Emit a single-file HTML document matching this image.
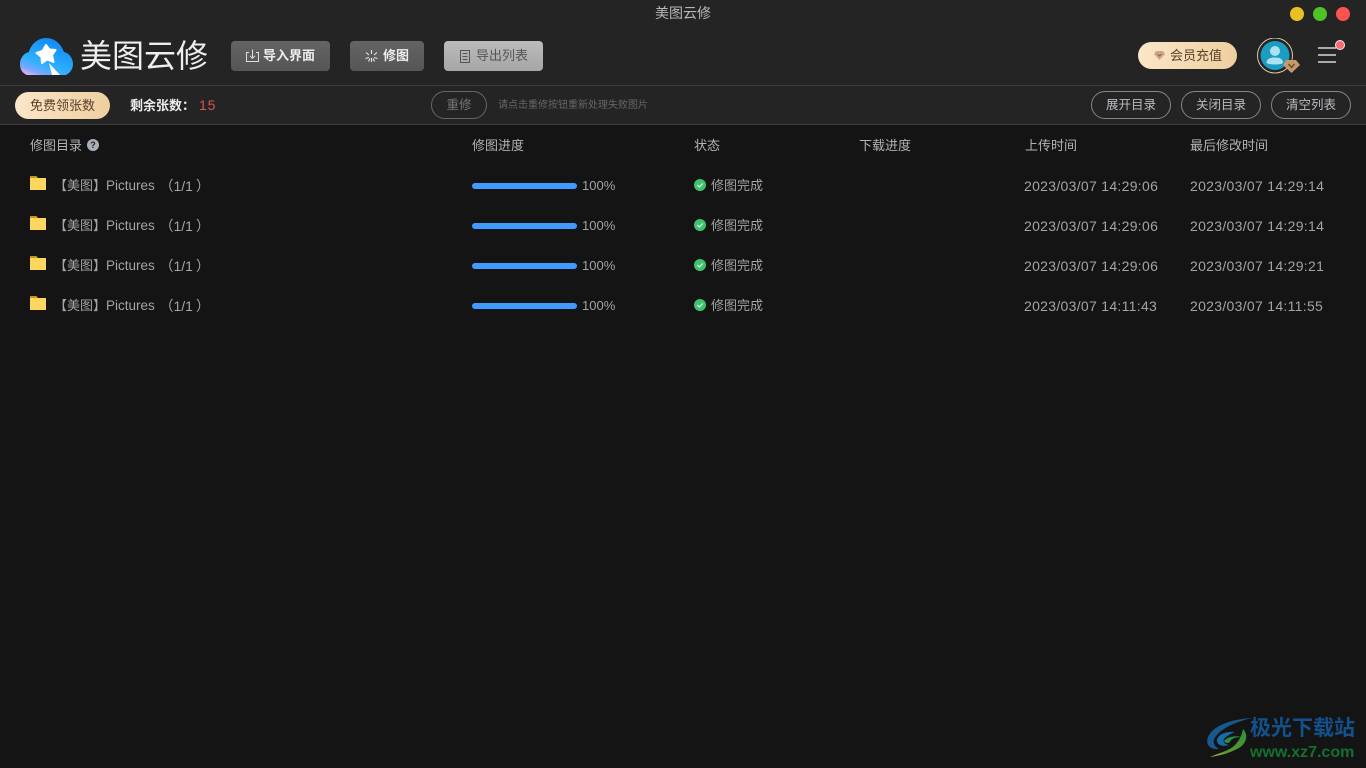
<!DOCTYPE html>
<html lang="zh"><head><meta charset="utf-8"><title>美图云修</title>
<style>
*{box-sizing:border-box;margin:0;padding:0}
html,body{width:1366px;height:768px;overflow:hidden;background:#141414;font-family:"Liberation Sans","Noto Sans CJK SC",sans-serif}
.a{position:absolute;white-space:nowrap}
#top{position:absolute;left:0;top:0;width:1366px;height:85px;background:#242424}
#bar{position:absolute;left:0;top:85px;width:1366px;height:40px;background:#242424;border-top:1px solid #3c3c3c;border-bottom:1px solid #3c3c3c}
.btn{position:absolute;top:41px;height:30px;border-radius:4px;background:linear-gradient(#646464,#555);color:#eee;font-size:13px;line-height:30px;font-weight:700}
.ol{position:absolute;top:91px;height:28px;border:1px solid #858585;border-radius:14px;color:#b8bcc0;font-size:12.5px;line-height:26px;text-align:center;width:80px}
.h{position:absolute;top:137px;font-size:13px;line-height:17px;color:#b0b4b8}
.t{position:absolute;font-size:13px;line-height:18px;color:#a4a4a4;white-space:nowrap}
.d{font-size:14px;letter-spacing:.3px}
.p{font-size:13.5px}
.q{font-size:14px}
.q span{margin-left:3px}
.pb{position:absolute;left:472px;width:105px;height:6px;border-radius:3px;background:#3f9bff}
.f{position:absolute;left:30px}
.c{position:absolute;left:694px}
</style></head><body>
<div id="top"></div><div id="bar"></div>

<div class="a" style="left:0;width:1366px;top:4px;text-align:center;font-size:14px;line-height:18px;color:#b8b8b8">美图云修</div>
<div class="a" style="left:1290px;top:7px;width:14px;height:14px;border-radius:50%;background:#e9c021"></div>
<div class="a" style="left:1313px;top:7px;width:14px;height:14px;border-radius:50%;background:#4fc326"></div>
<div class="a" style="left:1336px;top:7px;width:14px;height:14px;border-radius:50%;background:#fb5350"></div>

<svg class="a" style="left:20px;top:37px" width="53" height="38" viewBox="0 0 53 38">
<defs><linearGradient id="lg" x1="0.7" y1="0" x2="0.15" y2="1"><stop offset="0" stop-color="#0f86f5"/><stop offset=".65" stop-color="#2fb0ff"/><stop offset=".88" stop-color="#7fa8ff"/><stop offset="1" stop-color="#f0b0f0"/></linearGradient></defs>
<path d="M7 38C2 36 0 32 0 27C0 21 4 16 9 15C11 7 18 1 26 1C35 1 41 7 44 15C49 16 53 21 53 27C53 32 50 36 46 38Z" fill="url(#lg)"/>
<path d="M26 8L29.500 12.500L35.500 13L32 18L33.500 25L27 22.500L22 26L21.500 20L16.500 16L22.500 14Z" fill="#fff" stroke="#fff" stroke-width="2" stroke-linejoin="round"/>
<path d="M29 26L40 38L32 38Z" fill="#fff"/>
</svg>
<div class="a" style="left:80px;top:34px;font-size:32px;line-height:44px;color:#eee">美图云修</div>

<div class="btn" style="left:231px;width:99px;padding-left:32px">导入界面</div>
<svg class="a" style="left:246px;top:49px" width="13" height="14" viewBox="0 0 13 14" fill="none" stroke="#ddd" stroke-width="1"><path d="M3 3.500H.5V12.500H12.500V3.500H10M6.500 .5V9M4 6.800L6.500 9.300L9 6.800"/></svg>
<div class="btn" style="left:350px;width:74px;padding-left:33px">修图</div>
<svg class="a" style="left:365px;top:50px" width="13" height="13" viewBox="0 0 13 13" fill="none" stroke="#e4e4e4" stroke-width="1.100"><path d="M6.500 0V4M6.500 8V12M1 2.500L4 5M12 2.500L9 5M.5 8.500L4 7.500M12.500 8.500L9 7.500M3.500 11.500L5 8.500M9.500 11.500L8 8.500"/></svg>
<div class="btn" style="left:444px;width:99px;padding-left:32px;background:linear-gradient(#bbb,#a6a6a6);color:#555;font-weight:400">导出列表</div>
<svg class="a" style="left:460px;top:50px" width="10" height="13" viewBox="0 0 10 13" fill="none" stroke="#555" stroke-width="1"><path d="M.5 .5H9.500V12.500H.5ZM2.500 3.500H7.500M2.500 6.500H7.500M2.500 9.500H7.500"/></svg>

<div class="a" style="left:1138px;top:42px;width:99px;height:27px;border-radius:14px;background:linear-gradient(90deg,#fbe6c8,#eecf9f);color:#5a4028;font-size:13px;line-height:27px;padding-left:32px">会员充值</div>
<svg class="a" style="left:1154px;top:51px" width="11" height="9" viewBox="0 0 11 9"><path d="M2 0H9L11 3L5.500 9L0 3Z" fill="#c9a883"/><path d="M3.500 3L5.500 5L7.500 3" stroke="#8a6644" fill="none"/></svg>

<svg class="a" style="left:1257px;top:38px" width="44" height="38" viewBox="0 0 44 38">
<circle cx="18" cy="17.500" r="17.500" fill="none" stroke="#dcc6a4" stroke-width="1"/>
<circle cx="18" cy="17.500" r="14.500" fill="#1b9cc0"/>
<circle cx="18" cy="13" r="5" fill="#aee1ee"/>
<path d="M9.500 25C9.500 21 13 19.500 18 19.500C23 19.500 26 21 26 25C24 27 12 27 9.500 25Z" fill="#aee1ee"/>
<path d="M29 22H39L43 27L34.500 35L26 27Z" fill="#c49a6c"/>
<path d="M31.500 26L34.500 29.500L37.500 26" fill="none" stroke="#6d4a2a" stroke-width="1.400"/>
</svg>

<div class="a" style="left:1318px;top:47px;width:18px;height:2px;background:#aaa"></div>
<div class="a" style="left:1318px;top:54px;width:18px;height:2px;background:#aaa"></div>
<div class="a" style="left:1318px;top:61px;width:18px;height:2px;background:#aaa"></div>
<div class="a" style="left:1336px;top:41px;width:8px;height:8px;border-radius:50%;background:#fb6a70;box-shadow:0 0 0 1px #eee"></div>

<div class="a" style="left:15px;top:92px;width:95px;height:27px;border-radius:14px;background:linear-gradient(90deg,#fbe6c8,#eecf9f);color:#5a4028;font-size:13px;line-height:27px;text-align:center">免费领张数</div>
<div class="a" style="left:130px;top:97px;font-size:13px;line-height:18px;color:#eee;font-weight:700">剩余张数：</div>
<div class="a" style="left:199px;top:96px;font-size:14px;line-height:18px;color:#d9534f;letter-spacing:.8px">15</div>
<div class="ol" style="left:431px;width:56px;border-color:#666;color:#777">重修</div>
<div class="a" style="left:498px;top:99px;font-size:10px;line-height:14px;color:#666">请点击重修按钮重新处理失败图片</div>
<div class="ol" style="left:1091px">展开目录</div>
<div class="ol" style="left:1181px">关闭目录</div>
<div class="ol" style="left:1271px">清空列表</div>

<div class="h" style="left:30px">修图目录</div>
<div class="a" style="left:87px;top:139px;width:12px;height:12px;border-radius:50%;background:#a9b0b8;color:#222;font-size:9px;font-weight:700;line-height:12px;text-align:center">?</div>
<div class="h" style="left:472px">修图进度</div>
<div class="h" style="left:694px">状态</div>
<div class="h" style="left:859px">下载进度</div>
<div class="h" style="left:1025px">上传时间</div>
<div class="h" style="left:1190px">最后修改时间</div>

<!-- row 1 -->
<svg class="f" style="top:176px" width="16" height="14" viewBox="0 0 16 14"><path d="M0 0H6.500L8 2H0Z" fill="#c8931d"/><path d="M0 2H16V14H0Z" fill="#fdd65f"/></svg>
<div class="t" style="left:54px;top:177px">【美图】<span class="p">Pictures</span></div>
<div class="t q" style="left:159.500px;top:177px">（1/1<span>）</span></div>
<div class="pb" style="top:183px"></div>
<div class="t" style="left:582px;top:177px">100%</div>
<svg class="c" style="top:179px" width="12" height="12" viewBox="0 0 12 12"><circle cx="6" cy="6" r="6" fill="#3dc36d"/><path d="M3.300 6L5.300 8L8.700 4.500" fill="none" stroke="#fff" stroke-width="1"/></svg>
<div class="t" style="left:711px;top:177px">修图完成</div>
<div class="t d" style="left:1024px;top:177px">2023/03/07 14:29:06</div>
<div class="t d" style="left:1190px;top:177px">2023/03/07 14:29:14</div>

<!-- row 2 -->
<svg class="f" style="top:216px" width="16" height="14" viewBox="0 0 16 14"><path d="M0 0H6.500L8 2H0Z" fill="#c8931d"/><path d="M0 2H16V14H0Z" fill="#fdd65f"/></svg>
<div class="t" style="left:54px;top:217px">【美图】<span class="p">Pictures</span></div>
<div class="t q" style="left:159.500px;top:217px">（1/1<span>）</span></div>
<div class="pb" style="top:223px"></div>
<div class="t" style="left:582px;top:217px">100%</div>
<svg class="c" style="top:219px" width="12" height="12" viewBox="0 0 12 12"><circle cx="6" cy="6" r="6" fill="#3dc36d"/><path d="M3.300 6L5.300 8L8.700 4.500" fill="none" stroke="#fff" stroke-width="1"/></svg>
<div class="t" style="left:711px;top:217px">修图完成</div>
<div class="t d" style="left:1024px;top:217px">2023/03/07 14:29:06</div>
<div class="t d" style="left:1190px;top:217px">2023/03/07 14:29:14</div>

<!-- row 3 -->
<svg class="f" style="top:256px" width="16" height="14" viewBox="0 0 16 14"><path d="M0 0H6.500L8 2H0Z" fill="#c8931d"/><path d="M0 2H16V14H0Z" fill="#fdd65f"/></svg>
<div class="t" style="left:54px;top:257px">【美图】<span class="p">Pictures</span></div>
<div class="t q" style="left:159.500px;top:257px">（1/1<span>）</span></div>
<div class="pb" style="top:263px"></div>
<div class="t" style="left:582px;top:257px">100%</div>
<svg class="c" style="top:259px" width="12" height="12" viewBox="0 0 12 12"><circle cx="6" cy="6" r="6" fill="#3dc36d"/><path d="M3.300 6L5.300 8L8.700 4.500" fill="none" stroke="#fff" stroke-width="1"/></svg>
<div class="t" style="left:711px;top:257px">修图完成</div>
<div class="t d" style="left:1024px;top:257px">2023/03/07 14:29:06</div>
<div class="t d" style="left:1190px;top:257px">2023/03/07 14:29:21</div>

<!-- row 4 -->
<svg class="f" style="top:296px" width="16" height="14" viewBox="0 0 16 14"><path d="M0 0H6.500L8 2H0Z" fill="#c8931d"/><path d="M0 2H16V14H0Z" fill="#fdd65f"/></svg>
<div class="t" style="left:54px;top:297px">【美图】<span class="p">Pictures</span></div>
<div class="t q" style="left:159.500px;top:297px">（1/1<span>）</span></div>
<div class="pb" style="top:303px"></div>
<div class="t" style="left:582px;top:297px">100%</div>
<svg class="c" style="top:299px" width="12" height="12" viewBox="0 0 12 12"><circle cx="6" cy="6" r="6" fill="#3dc36d"/><path d="M3.300 6L5.300 8L8.700 4.500" fill="none" stroke="#fff" stroke-width="1"/></svg>
<div class="t" style="left:711px;top:297px">修图完成</div>
<div class="t d" style="left:1024px;top:297px">2023/03/07 14:11:43</div>
<div class="t d" style="left:1190px;top:297px">2023/03/07 14:11:55</div>

<!-- watermark -->
<svg class="a" style="left:1205px;top:717px" width="48" height="44" viewBox="0 0 48 44">
<defs><linearGradient id="wg" x1="1" y1="0" x2="0" y2="1"><stop offset="0" stop-color="#2f8f3a"/><stop offset=".7" stop-color="#5a9a30"/><stop offset="1" stop-color="#c8b83a"/></linearGradient></defs>
<path d="M47 1C28 2 8 8 3 20C0 28 6 33 14 32C8 29 7 24 11 19C18 10 34 4 47 1Z" fill="#17598f"/>
<path d="M30 15C20 14 12 18 12 24C12 28 18 30 24 28C18 27 17 23 21 20C24 18 27 16 30 15Z" fill="#1a6aa5"/>
<path d="M38 12C44 18 42 28 30 33C22 37 12 39 5 40C14 36 24 34 30 28C34 24 37 18 38 12Z" fill="url(#wg)"/>
<path d="M19 24C22 20 30 18 36 20C30 20 26 22 25 25C23 27 20 26 19 24Z" fill="#2a8a4a"/>
</svg>
<div class="a" style="left:1250px;top:716px;font-size:21px;line-height:26px;font-weight:700;color:#12518c">极光下载站</div>
<div class="a" style="left:1250px;top:743px;font-size:16px;line-height:19px;font-weight:700;color:#127030">www.xz7.com</div>
</body></html>
